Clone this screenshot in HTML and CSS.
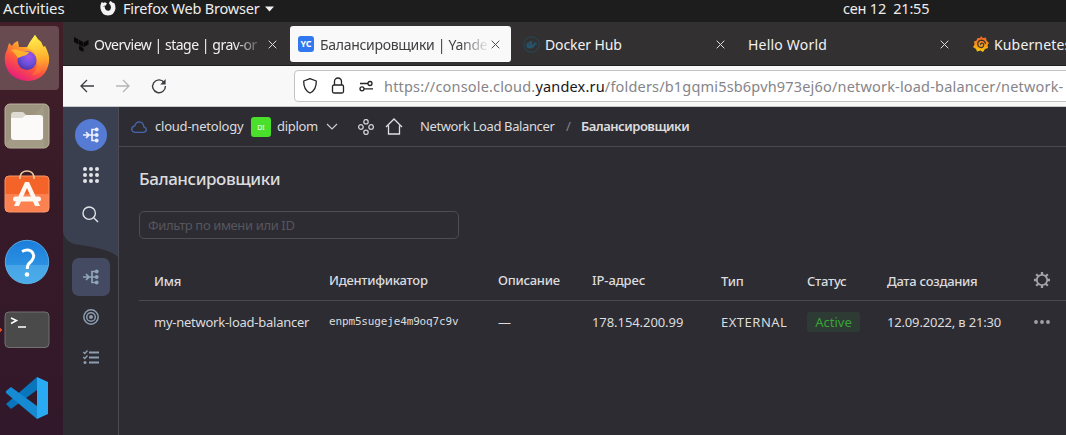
FILE: index.html
```html
<!DOCTYPE html>
<html lang="ru">
<head>
<meta charset="utf-8">
<title>Балансировщики | Yandex Cloud</title>
<link rel="stylesheet" href="styles.css">
</head>
<body>
<div class="topbar">
  <span class="activities">Activities</span>
  <svg class="appicon" width="16" height="16" viewBox="0 0 16 16"><path d="M1 3.500 2 1.800 3 3 5 2.300 7 3.500 6 5Q4.500 6 5 8.500 6 11 8.500 10.800 11 10 11 7.500 11 5 9 3.500L10 1Q12 1.300 13 3L14 2.800Q15.800 5 15.500 8.500 14.500 15 8 15.500 1.500 15 .5 8.500Q0 6 1 3.500Z" fill="#f3f3f3"/><path d="M3.500 6.500Q5 5.500 7 6.500L5 7.500 6 9" fill="none" stroke="#1d1d1d" stroke-width=".7"/></svg>
  <span class="appname">Firefox Web Browser</span>
  <svg class="appcaret" width="9" height="6" viewBox="0 0 9 6"><path d="M0 .5H9L4.500 5.500Z" fill="#f3f3f3"/></svg>
  <span class="clock">сен 12&nbsp; 21:55</span>
</div>
<div class="desktop">
  <nav class="dock">
    <div class="dockitem current">
      <svg width="48" height="48" viewBox="0 0 48 48">
        <defs>
          <linearGradient id="ff" x1=".8" y1="0" x2=".25" y2="1"><stop offset="0" stop-color="#fff44f"/><stop offset=".3" stop-color="#ffb52a"/><stop offset=".62" stop-color="#ff593b"/><stop offset="1" stop-color="#e31587"/></linearGradient>
          <radialGradient id="fb" cx=".6" cy=".3" r=".8"><stop offset="0" stop-color="#a455e8"/><stop offset=".5" stop-color="#6b51dc"/><stop offset="1" stop-color="#4a2d9d"/></radialGradient>
          <linearGradient id="fy" x1=".5" y1="0" x2=".6" y2="1"><stop offset="0" stop-color="#fff34c"/><stop offset=".6" stop-color="#ffae2e"/><stop offset="1" stop-color="#ff5a3a"/></linearGradient>
        </defs>
        <path d="M4 16 6 9 9 12Q11 8 15 7L16 13 24 13 27 8 32 1Q34 5 38 8L40 13 42 12Q47 21 46 28 43 46 25 47 6 46 2 29 1 21 4 16Z" fill="url(#ff)"/>
        <path d="M32 1Q34 5 38 8L41 14Q47 22 43 32 38 41 29 41 36 34 34 26 32 16 24 14L27 8Z" fill="url(#fy)"/>
        <circle cx="24" cy="26.500" r="9.500" fill="url(#fb)"/>
        <path d="M8 16Q14 14 18 17L26 18Q25 21 20 22L15 24Q13 20 8 16Z" fill="#ffb02f"/>
      </svg>
    </div>
    <div class="dockitem">
      <svg width="46" height="46" viewBox="0 0 46 46"><rect x="1" y="1" width="44" height="44" rx="5" fill="#9d947f" stroke="#bbb39f"/><path d="M2 40 40 2V44H6Q2 44 2 40" fill="#aaa28e" opacity=".5"/><path d="M7 12Q7 9 10 9H18Q20 9 21 11L23 13V20H7Z" fill="#dedbd3"/><path d="M7 15H18L22 12H36Q39 12 39 15V34Q39 37 36 37H10Q7 37 7 34Z" fill="#fbfaf8"/></svg>
    </div>
    <div class="dockitem raised">
      <svg width="46" height="46" viewBox="0 0 46 46"><rect x="1" y="8" width="44" height="36" rx="4" fill="#f46428" stroke="#f89468"/><path d="M1 26H45V40Q45 44 41 44H5Q1 44 1 40Z" fill="#ff946b" opacity=".6"/><path d="M16 11V9Q17 3 23 3T30 9V11" fill="none" stroke="#f4cda0" stroke-width="1.600"/><path d="M21 14H25L36 38H31L23 20 15 38H10Z" fill="#fff8f2"/><rect x="9" y="28.500" width="28" height="5" rx="2.500" fill="#fff8f2"/></svg>
    </div>
    <div class="dockitem">
      <svg width="46" height="46" viewBox="0 0 46 46"><defs><linearGradient id="hp" x1="0" y1="0" x2="0" y2="1"><stop offset="0" stop-color="#1b7ddb"/><stop offset="1" stop-color="#38a0e6"/></linearGradient></defs><circle cx="23" cy="23" r="21.700" fill="url(#hp)" stroke="#56a9e4"/><path d="M1.600 26H44.400Q42 44 23 44.500 4 44 1.600 26Z" fill="#66bcee" opacity=".45"/><path d="M18 12.500Q23 10 27 12 31 15 29 19.500 28 22 25.500 24 23.200 26 23.300 30" fill="none" stroke="#fff" stroke-width="3"/><circle cx="23" cy="35.500" r="2.300" fill="#fff"/></svg>
    </div>
    <div class="dockitem running">
      <svg width="46" height="38" viewBox="0 0 46 38"><rect x="1" y="1" width="44" height="35.500" rx="4" fill="#4b4a4b" stroke="#737071"/><path d="M7 7 12.500 9.500 7 12.500M14 16H22" fill="none" stroke="#fff" stroke-width="1.500"/></svg>
    </div>
    <div class="dockitem">
      <svg width="44" height="44" viewBox="0 0 44 44"><path d="M1 28 32 1V14L6 33Z" fill="#0875bd"/><path d="M1 15 6 11 32 30V43L1 17Z" fill="#168bd3"/><path d="M32 1 43 6V38L32 43Z" fill="#29aaf2"/></svg>
    </div>
  </nav>
  <main class="browser">
    <div class="tabs">
      <div class="tab first">
        <svg width="16" height="16" viewBox="0 0 16 16"><path d="M1 1 5.500 3.500V8.500L1 6ZM6 3.800 10.500 6.300V11L6 8.700ZM11 6.300 15.500 3.700V8.500L11 11ZM6 9.500 10.500 12V16L6 13.800Z" fill="#090909"/></svg>
        <span class="tabtext faded t1">Overview | stage | grav-or</span>
        <svg class="close" width="9" height="9" viewBox="0 0 9 9"><path d="M.7.7 8.300 8.300M8.300.7.700 8.300"/></svg>
      </div>
      <div class="tab selected">
        <span class="yc">YC</span>
        <span class="tabtext faded t2">Балансировщики | Yande</span>
        <svg class="close" width="9" height="9" viewBox="0 0 9 9"><path d="M.7.7 8.300 8.300M8.300.7.700 8.300"/></svg>
      </div>
      <div class="tab docker">
        <svg width="17" height="17" viewBox="0 0 17 17"><circle cx="8.500" cy="8.500" r="7.700" fill="none" stroke="#254a5c"/><path d="M3 8.200H10.800Q11.400 7 10.800 5.600 12.300 6 12.500 7.300L14.300 7.500Q13.800 8.800 12.200 8.700 10.700 12.700 7 12.500 3 12.500 3 8.200ZM4 6.500H9V8H4ZM6.500 5H9V7H6.500Z" fill="#27536b"/></svg>
        <span class="tabtext t3">Docker Hub</span>
        <svg class="close" width="9" height="9" viewBox="0 0 9 9"><path d="M.7.7 8.300 8.300M8.300.7.700 8.300"/></svg>
      </div>
      <div class="tab hello">
        <span class="tabtext t4">Hello World</span>
        <svg class="close" width="9" height="9" viewBox="0 0 9 9"><path d="M.7.7 8.300 8.300M8.300.7.700 8.300"/></svg>
      </div>
      <div class="tab grafana">
        <svg width="16" height="16" viewBox="0 0 16 16"><defs><linearGradient id="gr" x1="0" y1="0" x2="0" y2="1"><stop offset="0" stop-color="#f05a28"/><stop offset="1" stop-color="#fbca0a"/></linearGradient></defs><path d="M8 0 10 2 13 1.500 13.500 4.500 16 7 14.500 9 15 12 12 13 10 16 7.500 14.500 4 15.500 3 13 0 11 1.500 8.500 1 5.500 3.500 4.500 4.500 2 7 2Z" fill="url(#gr)"/><path d="M12.500 8Q12 4.500 8.500 4.200 5 4.500 4.700 8 5 11.500 8.500 11.600 10.800 11 10.800 8.800 10.500 7 8.700 7 7.200 7.500 7.700 9" fill="none" stroke="#353132" stroke-width="1.200"/></svg>
        <span class="tabtext t5">Kubernetes</span>
      </div>
    </div>
    <div class="toolbar">
      <svg class="navicons" width="90" height="18" viewBox="0 0 90 18"><path d="M15 9H2M8 3 2 9 8 15" fill="none" stroke="#3d3d42" stroke-width="1.300"/><path d="M37 9H50M44 3 50 9 44 15" fill="none" stroke="#b5b5b8" stroke-width="1.300"/><path d="M85 5.300A6.400 6.400 0 1 0 86.400 9" fill="none" stroke="#3d3d42" stroke-width="1.400"/><path d="M86.600 2V7.400H81.200Z" fill="#3d3d42"/></svg>
      <div class="urlbar">
        <svg width="72" height="18" viewBox="0 0 72 18"><g fill="none" stroke="#242428" stroke-width="1.300"><path d="M8 1.700 14.300 4Q14.500 13 8 16 1.500 13 1.700 4Z" stroke-linejoin="round"/><rect x="30.500" y="8" width="11" height="8" rx="1.500"/><path d="M32.500 8V4.500A3.500 3.500 0 0 1 39.500 4.500V8"/><circle cx="68" cy="6.500" r="2"/><circle cx="60" cy="11.800" r="2"/><path d="M58 6.500H66M62 11.800H71"/></g></svg>
        <span class="url">https://console.cloud.<b>yandex.ru</b>/folders/b1gqmi5sb6pvh973ej6o/network-load-balancer/network-</span>
      </div>
    </div>
    <div class="console">
      <aside class="side">
        <svg class="wave" width="55" height="150" viewBox="0 0 55 150"><path d="M0 0H55V150C48 144 42 143 30 140L11 137Q2 134 0 125Z" fill="#3b4051"/></svg>
        <div class="sideitems">
          <div class="service"><svg width="16" height="16" viewBox="0 0 16 16"><g fill="none" stroke="#eceff8" stroke-width="1.700"><path d="M0 8H14M3 5 6 8 3 11M13.500 2.500H9V13.500H13.500"/></g><g fill="#eceff8"><circle cx="13.700" cy="2.500" r="1.900"/><circle cx="13.700" cy="8" r="1.900"/><circle cx="13.700" cy="13.500" r="1.900"/></g></svg></div>
          <svg class="apps" width="16" height="16" viewBox="0 0 16 16"><g fill="#e2e3e8"><circle cx="2" cy="2" r="2"/><circle cx="8" cy="2" r="2"/><circle cx="14" cy="2" r="2"/><circle cx="2" cy="8" r="2"/><circle cx="8" cy="8" r="2"/><circle cx="14" cy="8" r="2"/><circle cx="2" cy="14" r="2"/><circle cx="8" cy="14" r="2"/><circle cx="14" cy="14" r="2"/></g></svg>
          <svg class="search" width="17" height="17" viewBox="0 0 17 17"><g fill="none" stroke="#e2e3e8" stroke-width="1.400"><circle cx="7.200" cy="7.200" r="6.200"/><path d="M11.700 11.700 16 16"/></g></svg>
          <div class="active"><svg width="16" height="16" viewBox="0 0 16 16"><g fill="none" stroke="#90a5b8" stroke-width="1.700"><path d="M0 8H14M3 5 6 8 3 11M13.500 2.500H9V13.500H13.500"/></g><g fill="#90a5b8"><circle cx="13.700" cy="2.500" r="1.900"/><circle cx="13.700" cy="8" r="1.900"/><circle cx="13.700" cy="13.500" r="1.900"/></g></svg></div>
          <svg class="target" width="16" height="16" viewBox="0 0 16 16"><g fill="none" stroke="#8c9daf" stroke-width="1.500"><circle cx="8" cy="8" r="7.200"/><circle cx="8" cy="8" r="4.300"/></g><circle cx="8" cy="8" r="2" fill="#8c9daf"/></svg>
          <svg class="list" width="16" height="14" viewBox="0 0 16 14"><path d="M6 2.500H16M6 7.500H16M6 12.500H16" stroke="#8c9daf" stroke-width="2"/><path d="M.3 2 1.800 3.500 4.500.5M.3 7 1.800 8.500 4.500 5.500" fill="none" stroke="#8c9daf" stroke-width="1.400"/><circle cx="2" cy="12.400" r="1.500" fill="#8c9daf"/></svg>
        </div>
      </aside>
      <section class="content">
        <header class="crumbs">
          <svg class="cloud" width="16" height="12" viewBox="0 0 16 12"><path d="M4 11.300H12.500Q15.300 11 15.300 8.500 15.200 6.300 12.800 5.800 12.500 1 8.200.8 4.800 1 3.800 4.800.7 5.200.7 8.300.9 11 4 11.300Z" fill="none" stroke="#4866ac" stroke-width="1.300"/></svg>
          <span class="c1">cloud-netology</span>
          <span class="di">DI</span>
          <span class="c2">diplom</span>
          <svg class="chev" width="12" height="7" viewBox="0 0 12 7"><path d="M1 1 6 6 11 1" fill="none" stroke="#d0d0d2" stroke-width="1.100"/></svg>
          <svg class="res" width="16" height="16" viewBox="0 0 16 16"><g fill="none" stroke="#d0d0d2" stroke-width="1.300"><circle cx="8" cy="2.700" r="2.200"/><circle cx="2.900" cy="8" r="2.300"/><circle cx="13.100" cy="8" r="2.300"/><circle cx="8" cy="13.300" r="2.200"/></g></svg>
          <svg class="home" width="18" height="17" viewBox="0 0 18 17"><path d="M1 9 9 1 17 9M3.500 7.500V16H14.500V7.500" fill="none" stroke="#e0e0e1" stroke-width="1.300"/></svg>
          <span class="c3">Network Load Balancer</span>
          <span class="slash">/</span>
          <span class="c4">Балансировщики</span>
        </header>
        <h1>Балансировщики</h1>
        <div class="filter"><span>Фильтр по имени или ID</span></div>
        <div class="table">
          <div class="row head">
            <span class="low">Имя</span><span>Идентификатор</span><span>Описание</span><span class="ip">IP-адрес</span><span class="low">Тип</span><span class="low">Статус</span><span class="low">Дата создания</span>
            <svg width="18" height="18" viewBox="0 0 18 18"><g fill="none" stroke="#a3a2a6"><circle cx="9" cy="9" r="5.200" stroke-width="1.800"/><path d="M9 4V1M9 14V17M4 9H1M14 9H17M5.500 5.500 3.200 3.200M12.500 5.500 14.800 3.200M5.500 12.500 3.200 14.800M12.500 12.500 14.800 14.800" stroke-width="2.300"/></g></svg>
          </div>
          <div class="row data">
            <span class="name">my-network-load-balancer</span><span class="mono">enpm5sugeje4m9oq7c9v</span><span>—</span><span class="addr">178.154.200.99</span><span class="type">EXTERNAL</span><span class="badge">Active</span><span class="date">12.09.2022, в 21:30</span>
            <svg width="18" height="4" viewBox="0 0 18 4"><g fill="#a3a2a6"><circle cx="3" cy="2" r="1.900"/><circle cx="9" cy="2" r="1.900"/><circle cx="15" cy="2" r="1.900"/></g></svg>
          </div>
        </div>
      </section>
    </div>
  </main>
</div>
</body>
</html>
```
FILE: styles.css
```css
* { box-sizing: border-box; }
body { margin: 0; width: 1066px; height: 435px; overflow: hidden; font-family: "Noto Sans", sans-serif; background: #2d2c33; }
svg { display: block; flex: none; }
span { white-space: nowrap; }

.topbar { height: 22px; background: #1d1d1d; color: #ededed; display: flex; font-size: 14.5px; line-height: 17px; }
.activities { width: 100px; padding-left: 3px; font-size: 15px; letter-spacing: -0.1px; }
.appicon { margin-right: 7px; }
.appname { width: 142px; letter-spacing: -0.2px; }
.appcaret { margin-top: 6px; }
.clock { margin-left: 569px; letter-spacing: -0.2px; }

.desktop { display: flex; height: 413px; }
.dock { width: 63px; flex: none; padding-top: 2px; background: linear-gradient(#421f28, #371a28 45%, #31182a); }
.dockitem { height: 68px; width: 54px; display: flex; align-items: center; justify-content: center; }
.current { height: 64px; width: 59px; margin: 2px 0; padding-right: 5px; background: #674b50; border-radius: 0 4px 4px 0; }
.raised { padding-bottom: 7px; }
.running { background: radial-gradient(circle at 0 50%, #e2502a 0 1.500px, transparent 2px); }

.browser { width: 1003px; flex: none; }
.tabs { height: 44px; background: #323031; border-bottom: 1px solid #201f20; display: flex; color: #f2f2f2; font-size: 14px; overflow: hidden; }
.tab { flex: none; height: 36px; margin-top: 4px; display: flex; align-items: center; line-height: 20px; }
.first { width: 227px; padding-left: 10px; gap: 5px; }
.selected { width: 221px; padding-left: 8px; gap: 6px; border-radius: 3px; background: #f9f9fa; color: #404043; }
.docker { width: 226px; padding-left: 12px; gap: 5px; }
.hello { width: 225px; padding-left: 11px; }
.grafana { width: 120px; padding-left: 11px; gap: 5px; }
.tabtext { flex: none; padding-top: 1px; }
.faded { -webkit-mask-image: linear-gradient(to right, #000 82%, transparent); mask-image: linear-gradient(to right, #000 82%, transparent); }
.t1 { width: 171px; letter-spacing: -0.47px; }
.first .close { margin-left: -2px; }
.t2 { width: 170px; letter-spacing: -0.3px; }
.selected .close { margin-left: -5px; stroke: #4c4c4f; }
.t3 { width: 166px; letter-spacing: -0.1px; }
.t4 { width: 192px; letter-spacing: 0.2px; }
.t5 { letter-spacing: 0.15px; }
.close { fill: none; stroke: #dededf; stroke-width: 1; }
.yc { width: 16px; height: 16px; border-radius: 3px; background: #3077f0; color: #fff; font: bold 9px/16px "Noto Sans", sans-serif; text-align: center; }

.toolbar { height: 41px; background: #f8f8f9; border-bottom: 1px solid #c9c9cc; display: flex; align-items: center; padding-left: 16px; overflow: hidden; }
.navicons { margin-right: 125px; }
.urlbar { flex: none; width: 900px; height: 32px; border: 1px solid #c3c3c6; border-radius: 4px; background: #fff; display: flex; align-items: center; padding-left: 7px; }
.url { margin-left: 10px; font-size: 14.5px; color: #858589; letter-spacing: 0.18px; }
.url b { font-weight: normal; color: #17171a; }

.console { display: flex; height: 328px; background: #2d2c33; font-size: 13px; color: #dcdcde; }
.side { width: 56px; flex: none; border-right: 1px solid #4c4b53; display: grid; }
.wave, .sideitems { grid-area: 1 / 1; }
.sideitems { display: flex; flex-direction: column; align-items: center; padding-top: 12px; z-index: 1; }
.service { width: 32px; height: 32px; border-radius: 50%; background: #567bd5; display: flex; align-items: center; justify-content: center; }
.apps { margin-top: 16px; }
.search { margin-top: 23px; }
.active { width: 38px; height: 38px; margin-top: 35px; border-radius: 7px; background: #444a62; display: flex; align-items: center; justify-content: center; }
.target { margin-top: 13px; }
.list { margin-top: 25px; }

.content { flex: 1; min-width: 0; }
.crumbs { height: 40px; border-bottom: 1px solid #4a4950; display: flex; align-items: center; padding-left: 12px; line-height: 20px; }
.crumbs span { padding-bottom: 2px; }
.cloud { margin-right: 8px; }
.c1 { width: 96px; letter-spacing: -0.22px; }
.crumbs .di { width: 20px; height: 20px; padding: 0; border-radius: 3px; background: #49df2b; color: #fff; font-size: 7px; line-height: 22px; text-align: center; }
.c2 { width: 49px; margin-left: 6px; letter-spacing: -0.3px; }
.res { margin-left: 20px; }
.home { margin-left: 11px; margin-right: 17px; }
.c3 { width: 146px; letter-spacing: -0.38px; }
.slash { width: 15px; color: #85848a; }
.c4 { font-weight: 600; letter-spacing: -0.5px; }
h1 { margin: 20px 0 20px 20px; font-size: 17px; line-height: 24px; font-weight: 500; letter-spacing: -0.43px; }
.filter { width: 320px; height: 28px; margin-left: 20px; padding-left: 8px; border: 1px solid #4e4d54; border-radius: 5px; color: #57565d; line-height: 27px; letter-spacing: -0.37px; }
.table { margin: 22px 0 0 20px; }
.row { display: grid; grid-template-columns: 175px 169px 94px 129px 86px 80px 146px 18px; align-items: center; padding: 0 0 2px 15px; }
.head { height: 40px; border-bottom: 1px solid #4a4950; font-weight: 500; letter-spacing: -0.27px; }
.ip { letter-spacing: -0.1px; }
.low { padding-top: 2px; }
.data { height: 43px; }
.name { letter-spacing: -0.25px; }
.mono { font: 11px "DejaVu Sans Mono", monospace; letter-spacing: -0.15px; }
.addr { letter-spacing: -0.07px; }
.type { letter-spacing: 0.5px; }
.date { letter-spacing: -0.17px; }
.badge { width: 53px; height: 20px; border-radius: 3px; background: #2d3b34; color: #3aa336; line-height: 20px; text-align: center; }
```
